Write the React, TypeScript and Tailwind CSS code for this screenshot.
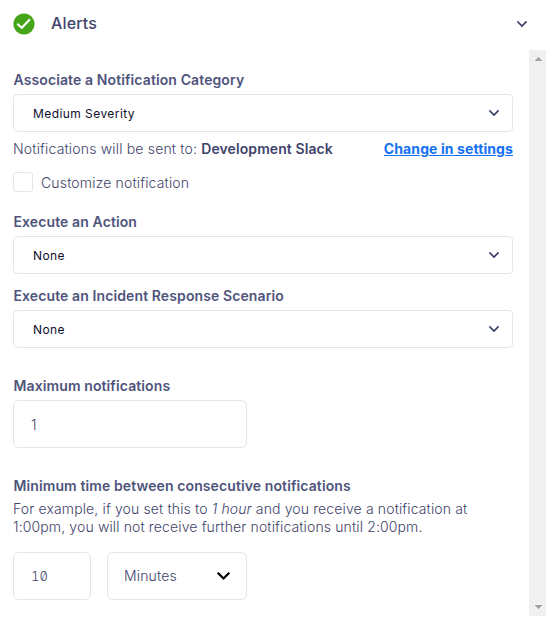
import React from "react";

function Chevron({ className }: { className: string }) {
  return (
    <svg viewBox="0 0 12 8" className={className} fill="none" stroke="currentColor" strokeLinecap="square">
      <path d="M2 2 L6 6 L10 2" />
    </svg>
  );
}

function Label({ children }: { children: React.ReactNode }) {
  return <div className="h-7 whitespace-nowrap pl-[0.5px] text-sm leading-7 font-semibold tracking-[0.0075em] text-[#4f547c]">{children}</div>;
}

function Select({ value }: { value: string }) {
  return (
    <div className="flex h-[38px] items-center justify-between rounded-[4px] border border-[#e5e6ec] pr-3 pl-[19px] text-xs font-normal text-[#0e0e2c]">
      <span className="pt-0.5 tracking-[0.036em]">{value}</span>
      <Chevron className="h-2 w-3 stroke-[1.6] text-[#363b64]" />
    </div>
  );
}

export default function App() {
  return (
    <div className="flex h-[622px] w-[553px] flex-col overflow-hidden bg-white font-['Inter',sans-serif] font-light text-[#40446a]">
      <header className="flex h-[50px] items-start justify-between pr-[25px] pl-[13px]">
        <div className="flex h-[47px] items-center">
          <svg viewBox="0 0 22 22" className="h-[22px] w-[22px]">
            <circle cx="11" cy="11" r="10.6" fill="#46a41b" />
            <path d="M4.2 10.8 L8.8 14.8 L17 6.2" fill="none" stroke="#fff" strokeWidth="2" />
          </svg>
          <h1 className="ml-4 -mt-0.5 text-base font-medium tracking-[0.01em]">Alerts</h1>
        </div>
        <Chevron className="mt-5 h-2 w-3 stroke-[1.6] text-[#363b64]" />
      </header>

      <div className="flex h-[566px]">
        <main className="ml-[13px] flex w-[500px] flex-col pt-4">
          <Label>Associate a Notification Category</Label>
          <Select value="Medium Severity" />
          <div className="flex h-[34px] items-center justify-between text-sm whitespace-nowrap">
            <span className="tracking-[0.0125em]">
              Notifications will be sent to: <b className="font-semibold tracking-[0.006em]">Development Slack</b>
            </span>
            <a className="font-bold tracking-[0.007em] text-[#1671f4] underline">Change in settings</a>
          </div>
          <label className="mt-1.5 flex h-5 items-center gap-2 text-sm">
            <span className="h-5 w-5 rounded-[3px] border border-[#e5e6ec]" />
            <span className="pt-0.5 tracking-[0.0115em]">Customize notification</span>
          </label>
          <div className="mt-4">
            <Label>Execute an Action</Label>
            <Select value="None" />
          </div>
          <div className="mt-2">
            <Label>Execute an Incident Response Scenario</Label>
            <Select value="None" />
          </div>
          <div className="mt-6">
            <Label>Maximum notifications</Label>
            <div className="flex h-12 w-[234px] items-center rounded-[6px] border border-[#e5e6ec] pt-0.5 pl-[17px] text-sm">1</div>
          </div>
          <div className="mt-6">
            <Label>Minimum time between consecutive notifications</Label>
            <p className="text-sm leading-[18px] tracking-[0.0095em] whitespace-nowrap">
              For example, if you set this to <i>1 hour</i> and you receive a notification at
              <br />
              1:00pm, you will not receive further notifications until 2:00pm.
            </p>
          </div>
          <div className="mt-4 flex gap-4">
            <div className="flex h-12 w-[78px] items-center rounded-[6px] border border-[#e5e6ec] pt-0.5 pl-[17px] text-[13px] slashed-zero tabular-nums">
              10
            </div>
            <div className="flex h-12 w-[140px] items-center justify-between rounded-[6px] border border-[#e5e6ec] pr-[15px] pl-4 text-sm">
              <span className="tracking-[0.0115em]">Minutes</span>
              <Chevron className="h-[10px] w-[15px] stroke-[1.8] text-black" />
            </div>
          </div>
        </main>
        <div className="ml-4 flex w-[17px] flex-col items-center justify-between bg-[#f0f0f0] py-[7px]">
          <svg viewBox="0 0 8 4" className="h-1 w-2" shapeRendering="crispEdges">
            <path d="M0 4 L4 0 L8 4Z" fill="#a3a3a3" />
          </svg>
          <svg viewBox="0 0 8 4" className="h-1 w-2" shapeRendering="crispEdges">
            <path d="M0 0 L4 4 L8 0Z" fill="#a3a3a3" />
          </svg>
        </div>
      </div>
    </div>
  );
}
